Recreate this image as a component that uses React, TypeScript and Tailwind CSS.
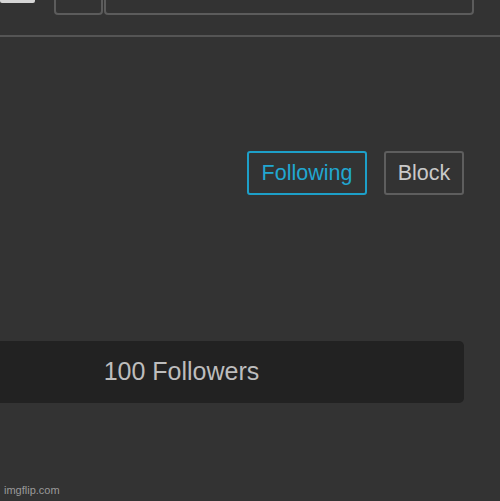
export default function App() {
  return (
    <div
      className="relative w-[500px] h-[501px] overflow-hidden bg-[#333333]"
      style={{ fontFamily: '"Liberation Sans", Arial, sans-serif' }}
    >
      {/* top bar */}
      <div className="h-[37px] border-b-2 border-[#555555] flex items-start">
        <div className="w-[35px] h-[3px] rounded-b-[2px] bg-[#d6d6d6]" />
        <div className="ml-[19px] -mt-[25px] flex h-[40px] w-[420px]">
          <div className="w-[49px] h-full rounded-[4px] border-2 border-[#5c5c5c]" />
          <div className="ml-[1px] flex-1 h-full rounded-[4px] border-2 border-[#5c5c5c]" />
        </div>
      </div>

      {/* actions */}
      <div className="mt-[114px] flex justify-end gap-[17px] pr-[36px]">
        <button className="w-[120px] h-[44px] rounded-[3px] border-2 border-[#1d9fc8] text-[21.5px] text-[#21a7d1] flex items-center justify-center">
          Following
        </button>
        <button className="w-[80px] h-[44px] rounded-[3px] border-2 border-[#5e5e5e] text-[21.5px] text-[#c9c9c9] flex items-center justify-center">
          Block
        </button>
      </div>

      {/* followers */}
      <div className="mt-[146px] -ml-[101px] w-[565px] h-[62px] rounded-[5px] bg-[#222222] flex items-center justify-center">
        <span className="text-[25px] text-[#bdbdbd]">100 Followers</span>
      </div>

      <div className="absolute left-[4px] bottom-[3px] text-[11px] text-[#9a9a9a]">imgflip.com</div>
    </div>
  );
}
